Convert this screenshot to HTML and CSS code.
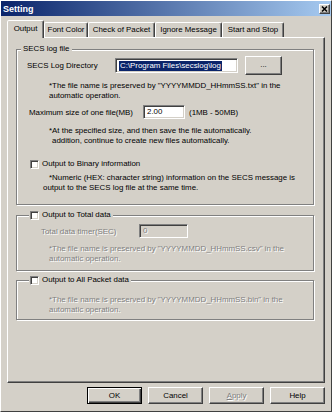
FILE: index.html
```html
<!DOCTYPE html>
<html lang="en">
<head>
    <meta charset="UTF-8">
    <title>Setting</title>
    <link rel="stylesheet" href="styles.css">
</head>
<body>
    <div class="window">
        <div class="titlebar">
            <span class="title">Setting</span>
            <span class="close">
                <svg width="9" height="8" viewBox="0 0 9 8">
                    <path d="M2 1.5 L7 6.5 M7 1.5 L2 6.5" stroke="#000" stroke-width="1.6" fill="none"/>
                </svg>
            </span>
        </div>

        <div class="body">
            <div class="tabs">
                <div class="tab active" style="width: 37px;">Output</div>
                <div class="tab" style="width: 44px;">Font Color</div>
                <div class="tab" style="width: 67px;">Check of Packet</div>
                <div class="tab" style="width: 67px;">Ignore Message</div>
                <div class="tab" style="width: 62px;">Start and Stop</div>
            </div>

            <div class="panel">
                <fieldset class="group group-log">
                    <legend>SECS log file</legend>

                    <div class="row row-dir">
                        <span class="lbl lbl-dir">SECS Log Directory</span>
                        <div class="field field-dir"><span class="sel">C:\Program Files\secslog\log</span></div>
                        <div class="btn btn-browse">...</div>
                    </div>
                    <p class="note note-txt">
                        <span>*The file name is preserved by "YYYYMMDD_HHmmSS.txt" in the</span>
                        <span>automatic operation.</span>
                    </p>

                    <div class="row row-size">
                        <span class="lbl lbl-size">Maximum size of one file(MB)</span>
                        <div class="field field-size">2.00</div>
                        <span class="range">(1MB - 50MB)</span>
                    </div>
                    <p class="note note-size">
                        <span>*At the specified size, and then save the file automatically.</span>
                        <span class="indent">addition, continue to create new files automatically.</span>
                    </p>

                    <label class="check check-bin"><span class="box"></span>Output to Binary information</label>
                    <p class="note note-bin">
                        <span>*Numeric (HEX: character string) information on the SECS message is</span>
                        <span class="outdent">output to the SECS log file at the same time.</span>
                    </p>
                </fieldset>

                <fieldset class="group group-total">
                    <legend><label class="check"><span class="box"></span>Output to Total data</label></legend>

                    <div class="row row-timer">
                        <span class="lbl lbl-timer disabled">Total data timer(SEC)</span>
                        <div class="field field-timer disabled">0</div>
                    </div>
                    <p class="note note-total disabled">
                        <span>*The file name is preserved by "YYYYMMDD_HHmmSS.csv" in the</span>
                        <span>automatic operation.</span>
                    </p>
                </fieldset>

                <fieldset class="group group-packet">
                    <legend><label class="check"><span class="box"></span>Output to All Packet data</label></legend>

                    <p class="note note-packet disabled">
                        <span>*The file name is preserved by "YYYYMMDD_HHmmSS.bin" in the</span>
                        <span>automatic operation.</span>
                    </p>
                </fieldset>
            </div>

            <div class="buttons">
                <div class="btn btn-default"><span>OK</span></div>
                <div class="btn">Cancel</div>
                <div class="btn disabled"><u>A</u>pply</div>
                <div class="btn">Help</div>
            </div>
        </div>
    </div>
</body>
</html>
```

FILE: styles.css
```css
* {
    box-sizing: border-box;
}

body {
    margin: 0;
    font-family: "Liberation Sans", Arial, sans-serif;
    font-size: 7.9px;
    color: #000;
    background-color: #d4d0c8;
}

.window {
    width: 332px;
    height: 412px;
    background-color: #d4d0c8;
    border: 1px solid;
    border-color: #fff #404040 #404040 #fff;
    display: flex;
    flex-direction: column;
}

.titlebar {
    height: 15px;
    flex: none;
    padding: 0 1px 0 2px;
    background: linear-gradient(to right, #0a246a, #a6caf0);
    color: #fff;
    display: flex;
    align-items: center;
    justify-content: space-between;
}

.title {
    font-size: 9px;
    font-weight: bold;
}

.close {
    width: 11px;
    height: 10px;
    background-color: #d4d0c8;
    border: 1px solid;
    border-color: #fff #404040 #404040 #fff;
    box-shadow: inset -1px -1px 0 #808080;
    display: flex;
    align-items: center;
    justify-content: center;
}

.body {
    flex: 1;
    padding: 4px 6px 7px 6px;
    display: flex;
    flex-direction: column;
}

/* tab strip */
.tabs {
    height: 17px;
    flex: none;
    display: flex;
    align-items: flex-end;
}

.tab {
    height: 15px;
    line-height: 13px;
    text-align: center;
    white-space: nowrap;
    border: 1px solid;
    border-bottom: none;
    border-color: #fff #404040 transparent #fff;
    border-radius: 2px 2px 0 0;
    box-shadow: inset -1px 0 0 #808080;
}

.tab.active {
    height: 18px;
    line-height: 15px;
    margin-bottom: -1px;
    background-color: #d4d0c8;
    position: relative;
    z-index: 1;
}

.panel {
    flex: 1;
    padding: 6px 10px 0 8px;
    border: 1px solid;
    border-color: #fff #404040 #404040 #fff;
    box-shadow: inset -1px -1px 0 #808080;
}

/* group boxes */
.group {
    margin: 0;
    padding: 0;
    min-inline-size: 0;
    border: 1px solid #808080;
    box-shadow: 1px 1px 0 #fff, inset 1px 1px 0 #fff;
}

.group legend {
    margin-left: 4px;
    padding: 0 2px;
    line-height: 10px;
    background-color: #d4d0c8;
}

.group-log {
    padding-bottom: 12px;
}

.group-total {
    margin-top: 5px;
    padding-bottom: 7px;
}

.group-packet {
    margin-top: 4px;
    padding-bottom: 5px;
}

.group-total legend,
.group-packet legend {
    margin-left: 12px;
    padding: 0 2px 0 1px;
}

.row {
    display: flex;
    align-items: center;
    white-space: nowrap;
}

.row-dir {
    height: 19px;
    margin-top: 2px;
}

.row-size {
    height: 14px;
    margin-top: 5px;
}

.row-timer {
    height: 14px;
    margin-top: 4px;
}

.lbl-dir {
    margin-left: 10px;
    width: 88px;
}

.lbl-size {
    margin-left: 12px;
    width: 114px;
}

.lbl-timer {
    margin-left: 24px;
    width: 98px;
}

.field {
    height: 14px;
    padding-left: 3px;
    line-height: 10px;
    background-color: #fff;
    border: 1px solid;
    border-color: #808080 #fff #fff #808080;
    box-shadow: inset 1px 1px 0 #404040, inset -1px -1px 0 #d4d0c8;
    display: flex;
    align-items: center;
    white-space: nowrap;
    overflow: hidden;
}

.field-dir {
    width: 123px;
    height: 15px;
}

.field-size {
    width: 42px;
}

.field-timer {
    width: 49px;
}

.field.disabled {
    background-color: #d4d0c8;
}

.sel {
    background-color: #0a246a;
    color: #fff;
    padding: 0 1px;
    line-height: 10px;
}

.range {
    margin-left: 4px;
}

.btn {
    width: 55px;
    height: 17px;
    display: flex;
    align-items: center;
    justify-content: center;
    background-color: #d4d0c8;
    border: 1px solid;
    border-color: #fff #404040 #404040 #fff;
    box-shadow: inset -1px -1px 0 #808080;
}

.btn-browse {
    width: 37px;
    height: 19px;
    margin-left: 7px;
    padding-bottom: 2px;
}

.btn-default {
    border-color: #000;
    box-shadow: inset 1px 1px 0 #fff, inset -1px -1px 0 #404040, inset -2px -2px 0 #808080;
}

/* notes under each option */
.note {
    margin: 0 0 0 32px;
    line-height: 9.5px;
    white-space: nowrap;
}

.note span {
    display: block;
}

.note .indent {
    padding-left: 3px;
}

.note .outdent {
    margin-left: -6px;
}

.note-txt {
    margin-top: 6px;
}

.note-size {
    margin-top: 7px;
}

.note-bin {
    margin-top: 4px;
}

.note-total {
    margin-top: 6px;
}

.note-packet {
    margin-top: 10px;
}

.check {
    display: flex;
    align-items: center;
    height: 10px;
    line-height: 10px;
    white-space: nowrap;
}

.check-bin {
    margin: 14px 0 0 13px;
}

.box {
    width: 9px;
    height: 9px;
    margin-right: 3px;
    background-color: #fff;
    border: 1px solid;
    border-color: #808080 #fff #fff #808080;
    box-shadow: inset 1px 1px 0 #404040, inset -1px -1px 0 #d4d0c8;
}

.disabled {
    color: #808080;
    text-shadow: 1px 1px 0 #fff;
}

.buttons {
    height: 17px;
    flex: none;
    margin-top: 4px;
    display: flex;
    justify-content: flex-end;
    gap: 6px;
}
```
